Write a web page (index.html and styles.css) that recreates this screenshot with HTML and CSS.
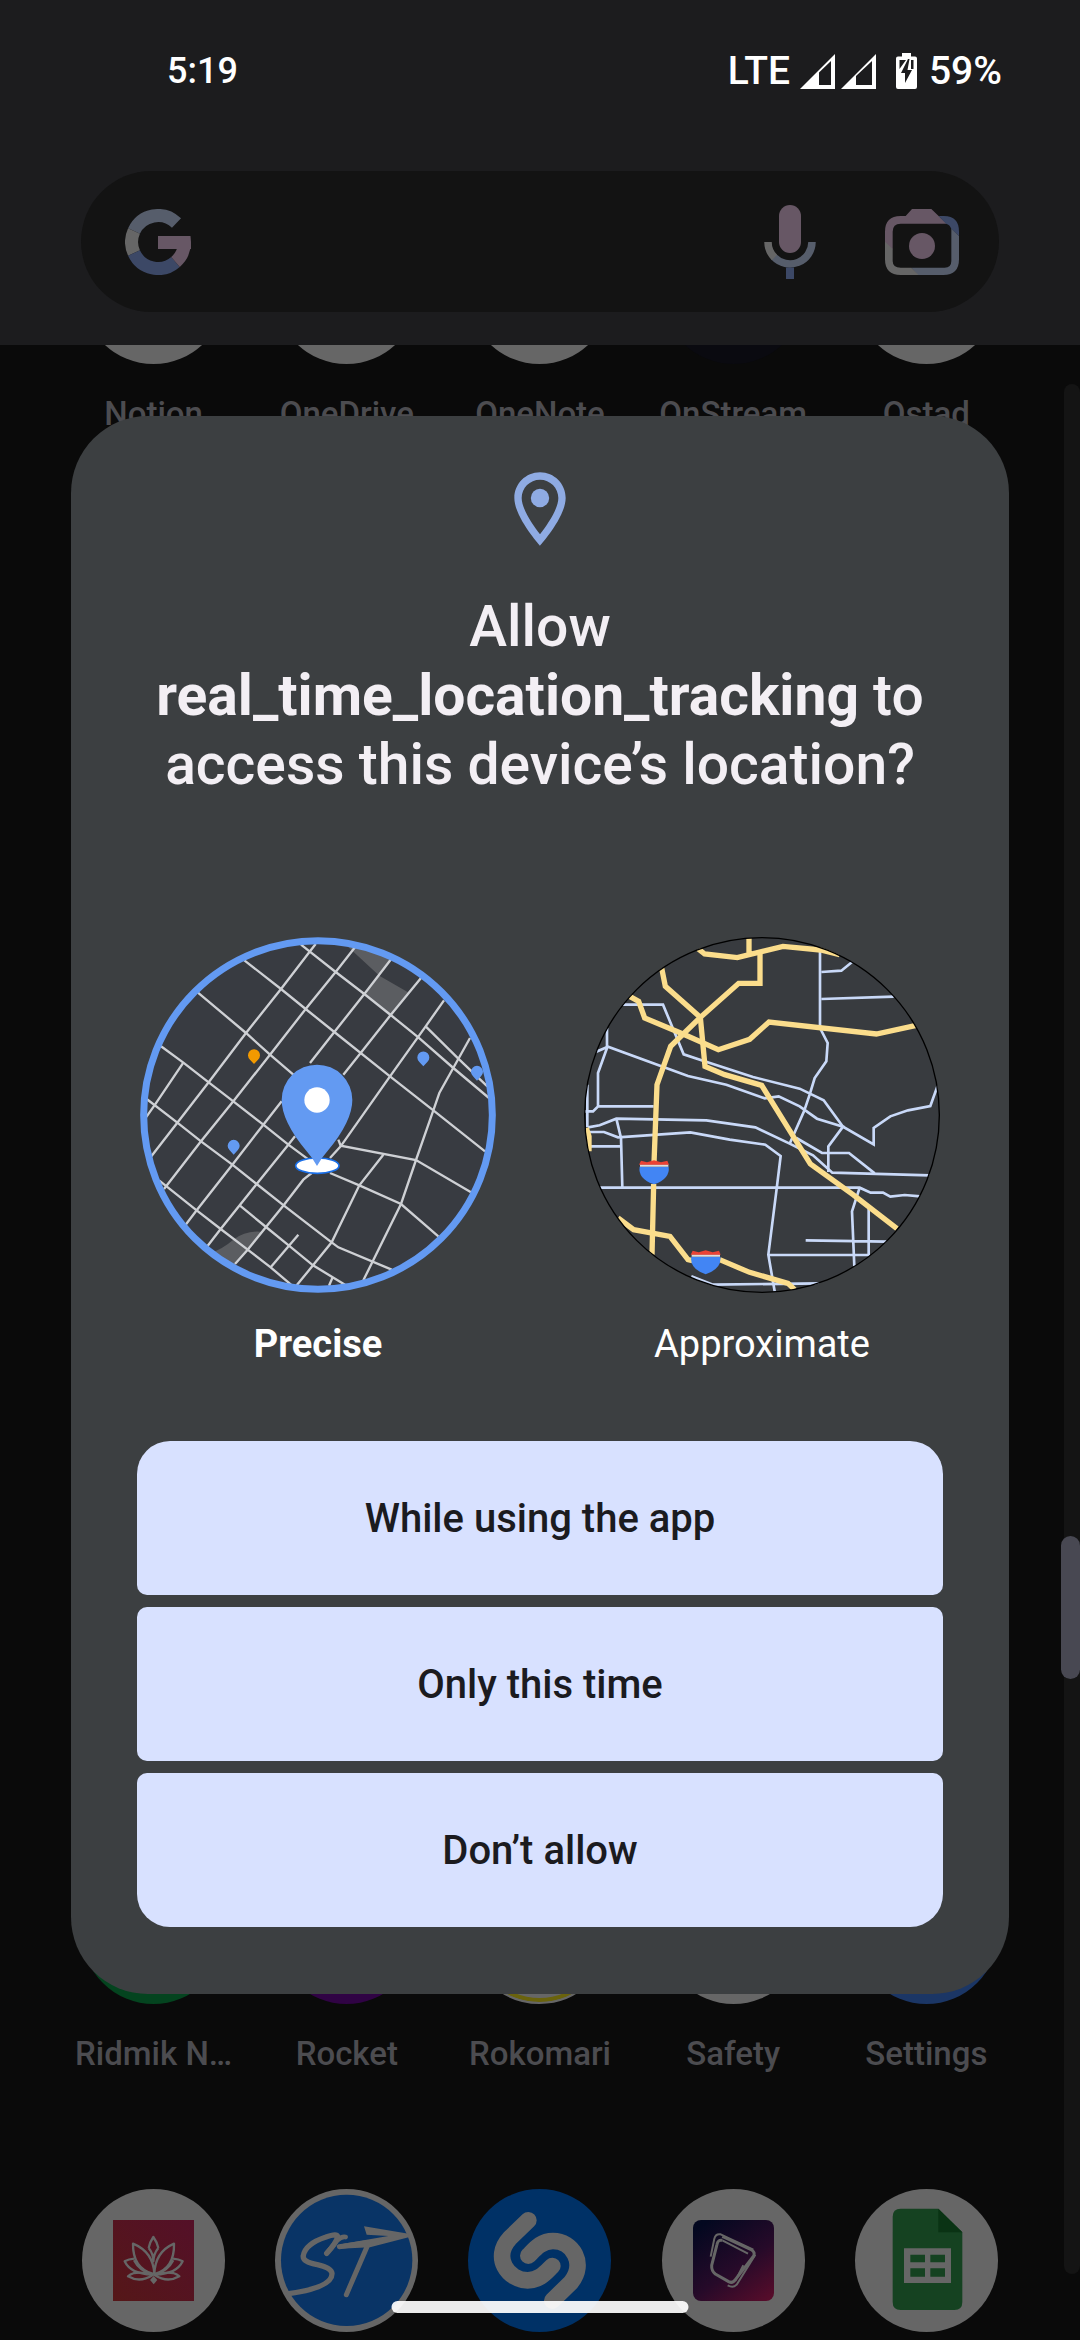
FILE: index.html
```html
<!DOCTYPE html>
<html lang="en">
<head>
<meta charset="utf-8">
<meta name="viewport" content="width=device-width, initial-scale=1">
<title>Location permission</title>
<link rel="stylesheet" href="styles.css">
</head>
<body>
<div class="screen">
  <header class="top">
    <div class="status">
      <span class="clock">5:19</span>
      <div class="status-icons">
        <span>LTE</span>
        <svg class="signal" viewBox="0 0 35 35" aria-hidden="true"><path fill="#fff" fill-rule="evenodd" d="M0 35L35 0V35ZM19 18.500V31H31V7Z"/></svg>
        <svg class="signal signal-last" viewBox="0 0 35 35" aria-hidden="true"><path fill="#fff" fill-rule="evenodd" d="M0 35L35 0V35ZM15 22V31H31V7Z"/></svg>
        <svg class="battery" viewBox="0 0 21 36" aria-hidden="true"><path fill="#fff" d="M6 0H15V3.500H19Q21 3.500 21 5.500V34Q21 36 19 36H2Q0 36 0 34V5.500Q0 3.500 2 3.500H6Z"/><path fill="#1c1c1e" d="M3.500 7H10L3.500 16ZM15 7H17.500V16H15ZM12 6L5 20H9V30L16 17H11.500L13.500 6Z"/></svg>
        <span>59%</span>
      </div>
    </div>
    <form class="search" role="search">
      <svg class="g-logo" viewBox="0 0 66 66" aria-hidden="true">
        <g fill="none" stroke-width="13">
          <path stroke="#565d6b" d="M51.500 14A26.500 26.500 0 0 0 9 22"/>
          <path stroke="#666" d="M9 22A26.500 26.500 0 0 0 9 44"/>
          <path stroke="#3c4866" d="M9 44A26.500 26.500 0 0 0 50.500 53"/>
          <path stroke="#675765" d="M50.500 53A26.500 26.500 0 0 0 59.500 33"/>
        </g>
        <path fill="#675765" d="M33 27H65.500L66 33V40H33Z"/>
      </svg>
      <input class="search-box" type="search" aria-label="Search">
      <button class="icon-button" type="button" aria-label="Voice search">
        <svg class="mic" viewBox="0 0 52 74" aria-hidden="true">
          <rect x="15" width="22" height="48" rx="11" fill="#675765"/>
          <path fill="none" stroke="#565d6b" stroke-width="7.500" d="M48 37A22 22 0 0 1 10 52"/>
          <path fill="none" stroke="#666" stroke-width="7.500" d="M4 37A22 22 0 0 0 10.500 52.500"/>
          <rect x="22" y="62.500" width="8" height="11.500" fill="#3c4866"/>
        </svg>
      </button>
      <button class="icon-button" type="button" aria-label="Search with camera">
        <svg class="lens" viewBox="435 87 222 198" aria-hidden="true">
          <path fill="#675765" d="M435 208V155Q435 108 482 108H497L516 87H574L620 131H482Q458 131 458 155V208Z"/>
          <path fill="#3c4866" d="M596 108H612Q657 108 657 155V168L634 147Q630 134 618 131Z"/>
          <path fill="#565d6b" d="M634 146L657 168V238Q657 285 610 285H533L514 263H614Q634 263 634 243Z"/>
          <path fill="#666" d="M435 185L458 207V243Q458 263 482 263H514L536 285H482Q435 285 435 238Z"/>
          <circle cx="546" cy="198" r="39" fill="#675765"/>
        </svg>
      </button>
    </form>
  </header>

  <main class="drawer">
    <div class="apps apps-top">
      <div class="app"><span class="disc"></span><span class="app-name">Notion</span></div>
      <div class="app"><span class="disc"></span><span class="app-name">OneDrive</span></div>
      <div class="app"><span class="disc"></span><span class="app-name">OneNote</span></div>
      <div class="app"><span class="disc disc-night"></span><span class="app-name">OnStream</span></div>
      <div class="app"><span class="disc"></span><span class="app-name">Ostad</span></div>
    </div>
    <div class="apps apps-bottom">
      <div class="app"><span class="disc disc-green"></span><span class="app-name">Ridmik N…</span></div>
      <div class="app"><span class="disc disc-purple"></span><span class="app-name">Rocket</span></div>
      <div class="app"><span class="disc disc-ring"></span><span class="app-name">Rokomari</span></div>
      <div class="app"><span class="disc"></span><span class="app-name">Safety</span></div>
      <div class="app"><span class="disc disc-blue"></span><span class="app-name">Settings</span></div>

      <div class="app">
        <svg class="disc" viewBox="66 87 429 429" aria-hidden="true">
          <defs><linearGradient id="rose" x1="0" y1="1" x2="1" y2="0"><stop offset="0" stop-color="#551718"/><stop offset="1" stop-color="#541028"/></linearGradient></defs>
          <rect x="159" y="180" width="243" height="243" fill="url(#rose)"/>
          <g fill="none" stroke="#666" stroke-width="7" stroke-linejoin="round">
            <path d="M266 264Q270 245 280 231Q291 246 295 264"/>
            <path d="M266 264Q280 281 280 304Q281 281 295 264"/>
            <path d="M280 342Q218 325 219 251Q280 276 283 342Q285 276 342 251Q344 325 284 342"/>
            <path d="M223 296Q206 297 194 304Q212 342 276 344Q238 332 222 301M339 296Q356 297 368 304Q350 342 286 344Q324 332 340 301"/>
            <path d="M222 339Q210 343 204 349Q240 370 278 345Q248 335 222 339ZM340 339Q352 343 358 349Q322 370 284 345Q314 335 340 339Z"/>
          </g>
          <path fill="#666" d="M281 348L292 360L281 373L270 360Z"/>
        </svg>
      </div>
      <div class="app">
        <svg class="disc" viewBox="645 87 429 429" aria-hidden="true">
          <circle cx="860" cy="301" r="197" fill="#093466"/>
          <g fill="none" stroke="#666" stroke-linecap="round" stroke-linejoin="round">
            <path stroke-width="16" d="M686 401Q818 382 816 340Q814 324 772 314Q726 306 730 287Q736 252 796 232Q834 218 833 231Q828 250 800 280"/>
            <path stroke-width="14" d="M800 280L832 241Q845 228 857 231"/>
            <path stroke-width="15" d="M838 260L920 248"/>
            <path stroke-width="15" d="M922 258L859 404"/>
          </g>
          <path fill="#666" d="M912 199L1046 221V232L930 262L840 266L850 251L985 228L920 224Z"/>
        </svg>
      </div>
      <div class="app">
        <svg class="disc disc-azure" viewBox="84 27 429 429" aria-hidden="true">
          <g fill="none" stroke="#666" stroke-width="50" stroke-linecap="round">
            <path d="M265 121L209 175C156 233 205 301 263 301C300 301 318 276 337 258"/>
            <path d="M265 227C283 209 302 183 339 183C397 183 439 249 393 307L337 362"/>
          </g>
        </svg>
      </div>
      <div class="app">
        <svg class="disc" viewBox="306 87 429 429" aria-hidden="true">
          <defs><linearGradient id="dusk" x1="0.200" y1="0" x2="0.900" y2="1"><stop offset="0" stop-color="#030820"/><stop offset="0.550" stop-color="#260a29"/><stop offset="1" stop-color="#560c2a"/></linearGradient></defs>
          <rect x="399" y="180" width="243" height="243" rx="24" fill="url(#dusk)"/>
          <path fill="none" stroke="#666" stroke-width="9" stroke-linejoin="round" d="M487 241Q474 238 471 253L455 316Q454 332 466 342L506 365Q518 371 526 359L581 288Q586 277 575 270L487 229"/>
          <path fill="none" stroke="#666" stroke-width="6" stroke-linejoin="round" d="M452 290L463 236Q467 220 482 223L580 269M487 241L564 281M550 316L526 362M503 376Q520 385 530 374L586 284"/>
        </svg>
      </div>
      <div class="app">
        <svg class="disc" viewBox="885 87 429 429" aria-hidden="true">
          <path fill="#154221" d="M1022 146H1135L1207 217V426Q1207 450 1183 450H1022Q998 450 998 426V170Q998 146 1022 146Z"/>
          <path fill="#0a3314" d="M1135 146L1207 217H1135Z"/>
          <path fill="#666" fill-rule="evenodd" d="M1032 265H1173V369H1032ZM1051 284V307H1095V284ZM1111 284V307H1155V284ZM1051 325V350H1095V325ZM1111 325V350H1155V325Z"/>
        </svg>
      </div>
    </div>
    <div class="scroll-track"></div>
  </main>
  <div class="scroll-thumb"></div>

  <div class="overlay">
    <section class="dialog" role="dialog" aria-labelledby="dialog-title">
      <svg class="pin" viewBox="0 0 24 24" aria-hidden="true"><path fill="#8fabe3" d="M12 2C8.130 2 5 5.130 5 9c0 5.250 7 13 7 13s7-7.750 7-13c0-3.870-3.130-7-7-7zM7 9c0-2.760 2.240-5 5-5s5 2.240 5 5c0 2.880-2.880 7.190-5 9.880C9.920 16.210 7 11.850 7 9z"/><circle cx="12" cy="9" r="2.500" fill="#8fabe3"/></svg>
      <h1 class="title" id="dialog-title">Allow <b>real_time_location_tracking</b> to access this device’s location?</h1>

      <div class="options">
        <label class="option option-selected">
          <input class="option-radio" type="radio" name="accuracy" checked>
          <svg class="map" viewBox="30 37 1068 1068" aria-hidden="true">
            <defs><clipPath id="disc-a"><circle cx="564" cy="571" r="520"/></clipPath></defs>
            <circle cx="564" cy="571" r="525" fill="#383b41"/>
            <g clip-path="url(#disc-a)">
              <path fill="#5b5d61" d="M636 50L782 100L748 153ZM748 153L834 203L782 271L706 208ZM240 985Q275 975 310 945Q350 915 400 922L353 975L310 1025Z"/>
              <g fill="none" stroke="#ced0d4" stroke-width="7">
                <path d="M343 107L453 193L527 253L613 322L780 455L910 557L1065 680"/>
                <path d="M513 60L617 142L703 208L782 271L865 338L970 430L1077 520"/>
                <path d="M203 203L348 325L420 390L490 450"/>
                <path d="M92 364L160 414L236 473L310 530L400 600L475 660L540 708"/>
                <path d="M50 523L142 594L213 650L307 720L380 778L461 842L605 953L625 968L785 1035"/>
                <path d="M88 768L200 857L272 913L353 975L422 1028L483 1080"/>
                <path d="M330 843L408 907L476 962L549 1022L645 1080"/>
                <path d="M887 305L985 402L1072 485"/>
                <path d="M48 578L75 540L160 414"/>
                <path d="M64 695L142 594L236 473L348 325L453 193L540 80L557 58"/>
                <path d="M102 793L213 650L310 530L420 390L527 253L617 142L675 68"/>
                <path d="M167 900L200 857L307 720L400 600L455 530"/>
                <path d="M540 415L613 322L703 208L782 105"/>
                <path d="M232 965L272 913L380 778L475 660L495 635"/>
                <path d="M640 450L692 385L782 271L873 160"/>
                <path d="M315 1018L353 975L408 907L461 842L520 765L545 745"/>
                <path d="M600 700L632 665L780 455L887 305L942 227"/>
                <path d="M422 1028L505 930"/>
                <path d="M500 1082L549 1022L605 953L688 782L760 690"/>
                <path d="M597 1083L608 1058"/>
                <path d="M625 645L632 663L858 706L1023 803"/>
                <path d="M600 745L688 782L813 838L925 935"/>
                <path d="M700 1067L813 838L858 706L910 557L928 505L1020 340"/>
              </g>
              <path fill="#f29900" d="M372 418L360 405A18 18 0 1 1 384 405Z"/>
              <path fill="#639af2" d="M880 425L868 412A18 18 0 1 1 892 412ZM1041 468L1029 455A18 18 0 1 1 1053 455ZM311 690L299 677A18 18 0 1 1 323 677Z"/>
            </g>
            <ellipse cx="562" cy="723" rx="65" ry="23" fill="#fff" stroke="#1a6fe8" stroke-width="5"/>
            <path fill="#639af2" d="M561 724Q548 700 530 680Q455 590 455 526A106 106 0 0 1 667 526Q667 590 592 680Q574 700 561 724Z"/>
            <circle cx="561" cy="526" r="38" fill="#fff"/>
            <circle cx="564" cy="571" r="523" fill="none" stroke="#639af2" stroke-width="21"/>
          </svg>
          <span>Precise</span>
        </label>
        <label class="option">
          <input class="option-radio" type="radio" name="accuracy">
          <svg class="map" viewBox="43 37 1068 1068" aria-hidden="true">
            <defs><clipPath id="disc-b"><circle cx="577" cy="571" r="533"/></clipPath></defs>
            <circle cx="577" cy="571" r="532" fill="#383b3f"/>
            <g clip-path="url(#disc-b)" fill="none">
              <g stroke="#c9d9f8" stroke-width="8">
                <path d="M751 80V310L774 355L770 410L735 460L720 510L703 560L660 657"/>
                <path d="M755 142L815 138L850 110M755 223L972 216"/>
                <path d="M160 240H280L342 389L400 408L550 457L690 492L762 527L820 606L912 659V610L962 575L1015 557L1082 544L1105 480"/>
                <path d="M78 382L115 366L355 454L470 480L585 521L627 515L690 545L742 582L820 606L776 665V742"/>
                <path d="M112 310V370L85 445V545L70 560H45M85 545H252M53 480V608"/>
                <path d="M55 608L90 602L140 582L410 587L557 608L660 657L730 692L788 744L1080 752"/>
                <path d="M55 622H103L145 638L362 623L480 645L587 660L633 694L620 800L596 990L615 1100"/>
                <path d="M140 582L154 640L158 788M60 665H154M90 789H870L903 804H940L962 816L1005 811L1052 815"/>
                <path d="M870 789L847 860L854 1025M897 850V991M708 947L950 951M596 991H900"/>
                <path d="M680 640L757 685H838L915 746M365 1055L430 1080L750 1076"/>
              </g>
              <g stroke="#fbdd8c" stroke-width="16">
                <path d="M385 72L405 88L503 99L640 65L753 76L810 90M538 40V90"/>
                <path d="M571 84V176H507L392 278L303 365L262 480L253 715M252 778L247 990"/>
                <path d="M276 130L287 185L392 278L406 425L465 450L576 482L680 650L722 718L850 810L982 912"/>
                <path d="M180 215L207 230L225 280L340 328L446 375L540 344L598 292L920 328L1040 302"/>
                <path d="M145 880L192 915L301 935L355 1005L368 1008M450 1005L540 1043L655 1076L675 1095"/>
                <path d="M50 610L58 635V680"/>
              </g>
              <path fill="#4285f4" d="M210 726H297Q302 762 253 779Q204 762 210 726Z"/>
              <path fill="#ddd" d="M211 719H296V726H211Z"/>
              <path fill="#ea4335" d="M214 708L232 713L253 707L274 713L293 708L298 720H208Z"/>
              <path fill="#4285f4" d="M365 996H452Q457 1032 408 1049Q359 1032 365 996Z"/>
              <path fill="#ddd" d="M366 989H451V996H366Z"/>
              <path fill="#ea4335" d="M369 978L387 983L408 977L429 983L448 978L453 990H363Z"/>
            </g>
            <circle cx="577" cy="571" r="532" fill="none" stroke="#000" stroke-width="4"/>
          </svg>
          <span>Approximate</span>
        </label>
      </div>

      <div class="actions">
        <button class="action" type="button">While using the app</button>
        <button class="action" type="button">Only this time</button>
        <button class="action" type="button">Don’t allow</button>
      </div>
    </section>
  </div>
  <div class="home-bar"></div>
</div>
</body>
</html>
```
FILE: styles.css
```css
* {
  box-sizing: border-box;
}

body {
  margin: 0;
  background: #0a0a0a;
  color: #fff;
  font-family: Roboto, "Liberation Sans", sans-serif;
}

svg {
  display: block;
  flex: none;
}

button,
input {
  margin: 0;
  border: 0;
  padding: 0;
  background: none;
  color: inherit;
  font: inherit;
}

.screen {
  position: relative;
  display: flex;
  flex-direction: column;
  height: 100vh;
  overflow: hidden;
}

/* Status bar and search */

.top {
  background: #1c1c1e;
  padding: 48px 78px 33px;
}

.status {
  display: flex;
  justify-content: space-between;
  padding-left: 89px;
  font-size: 39px;
  font-weight: 500;
  line-height: 46px;
}

.clock {
  font-size: 36px;
}

.status-icons {
  display: flex;
  align-items: center;
}

.signal {
  width: 35px;
  height: 35px;
  margin-left: 6px;
}

.signal:first-of-type {
  margin-left: 10px;
}

.battery {
  width: 21px;
  height: 36px;
  margin: 0 12px 0 20px;
}

.search {
  display: flex;
  align-items: center;
  height: 141px;
  margin: 77px 3px 0;
  padding: 0 40px 0 44px;
  border-radius: 71px;
  background: #131313;
}

.g-logo {
  width: 66px;
  height: 66px;
}

.search-box {
  flex: 1;
  min-width: 0;
  height: 66px;
  padding: 0 24px;
}

.icon-button + .icon-button {
  margin-left: 69px;
}

.mic {
  width: 52px;
  height: 74px;
}

.lens {
  width: 74px;
  height: 66px;
}

/* App drawer */

.drawer {
  position: relative;
  display: flex;
  flex: 1;
  flex-direction: column;
  justify-content: space-between;
  min-height: 0;
  overflow: hidden;
  padding: 0 57px 8px;
}

.apps {
  display: grid;
  grid-template-columns: repeat(5, 1fr);
  row-gap: 115px;
}

.apps-top {
  margin-top: -124px;
}

.app {
  display: flex;
  flex-direction: column;
  align-items: center;
  gap: 30px;
}

.disc {
  width: 143px;
  height: 143px;
  border-radius: 50%;
  background: #666;
}

.disc-night {
  background: #0a0a10;
}

.disc-green {
  background: #04441f;
}

.disc-purple {
  background: #300344;
}

.disc-ring {
  border: 2px solid #666;
  box-shadow: inset 0 0 0 4px #6a630c;
}

.disc-blue {
  background: #1b3665;
}

.disc-azure {
  background: #003166;
}

.app-name {
  color: #4c4c50;
  font-size: 33px;
  font-weight: 500;
  line-height: 40px;
  white-space: nowrap;
}

.scroll-track {
  position: absolute;
  top: 39px;
  right: 0;
  bottom: 66px;
  width: 16px;
  border-radius: 8px;
  background: #141414;
}

.scroll-thumb {
  position: absolute;
  top: 1536px;
  right: 0;
  width: 19px;
  height: 143px;
  border-radius: 10px;
  background: #484852;
}

/* Permission dialog */

.overlay {
  position: absolute;
  inset: 0;
  display: flex;
  align-items: center;
  padding: 70px 71px 0;
}

.dialog {
  flex: 1;
  display: flex;
  flex-direction: column;
  align-items: center;
  padding: 49px 66px 67px;
  border-radius: 77px;
  background: #3c3f41;
}

.pin {
  width: 88px;
  height: 88px;
}

.title {
  margin: 39px 0 0;
  color: #f3eff4;
  font-size: 57px;
  font-weight: 500;
  line-height: 69px;
  text-align: center;
}

.title b {
  font-weight: 700;
}

.options {
  align-self: stretch;
  display: flex;
  justify-content: space-between;
  margin-top: 138px;
  padding: 0 3px;
}

.option {
  position: relative;
  display: flex;
  flex-direction: column;
  align-items: center;
  gap: 28px;
  font-size: 38px;
  line-height: 46px;
}

.option-selected {
  font-weight: 700;
}

.option-radio {
  position: absolute;
  opacity: 0;
}

.map {
  width: 356px;
  height: 356px;
}

.actions {
  align-self: stretch;
  display: flex;
  flex-direction: column;
  gap: 12px;
  margin-top: 74px;
}

.action {
  height: 154px;
  border-radius: 10px;
  background: #d8e1ff;
  color: #1b1b1f;
  font-size: 40px;
  font-weight: 500;
}

.action:first-child {
  border-top-left-radius: 33px;
  border-top-right-radius: 33px;
}

.action:last-child {
  border-bottom-left-radius: 33px;
  border-bottom-right-radius: 33px;
}

.home-bar {
  position: absolute;
  bottom: 27px;
  left: 50%;
  width: 297px;
  height: 12px;
  border-radius: 6px;
  background: rgba(255, 255, 255, 0.92);
  transform: translateX(-50%);
}
```
